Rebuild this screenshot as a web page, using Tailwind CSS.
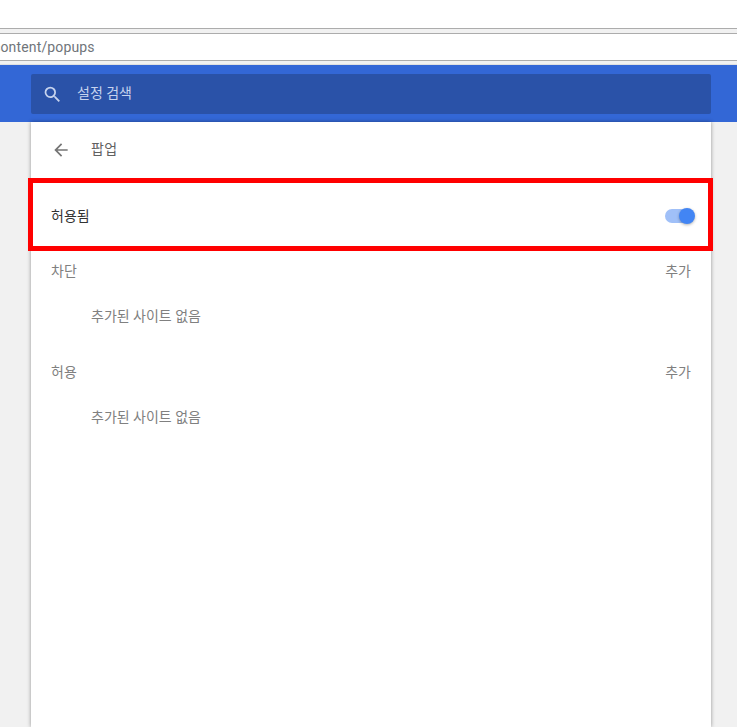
<!DOCTYPE html>
<html lang="ko">

<head>
  <meta charset="UTF-8" />
  <meta name="viewport" content="width=device-width, initial-scale=1.0" />
  <script src="https://cdn.jsdelivr.net/npm/@tailwindcss/browser@4"></script>
  <title>팝업</title>
</head>

<body class="bg-[#f1f1f1] h-[727px] w-[737px] overflow-hidden font-['Roboto','Noto_Sans_CJK_KR',sans-serif]">
  <!-- browser chrome -->
  <div class="h-[28px] bg-white"></div>
  <div class="h-[6px] bg-[#f1f1f1] border-y border-[#acacac]"></div>
  <div class="h-[27px] bg-white border-b border-[#acacac] flex items-center overflow-hidden">
    <span class="text-[14px] text-[#70757a] ml-[-7px] tracking-[0.15px] pt-[1px]">content/popups</span>
  </div>
  <div class="h-[4px] bg-[#f1f1f1] border-b border-[#e0e0e0]"></div>

  <!-- blue header -->
  <header class="h-[57px] bg-[#3367d6] pt-[9px] pl-[31px] pr-[26px]">
    <div class="h-[40px] bg-[#2a52a8] rounded-[2px] flex items-center pl-[11px]">
      <svg class="w-[21px] h-[21px]" viewBox="0 0 24 24" fill="#c6d3ee">
        <path d="M15.5 14h-.79l-.28-.27A6.47 6.47 0 0 0 16 9.5 6.5 6.5 0 1 0 9.5 16c1.61 0 3.09-.59 4.23-1.57l.27.28v.79l5 4.99L20.49 19l-4.99-5zm-6 0C7.01 14 5 11.99 5 9.5S7.01 5 9.5 5 14 7.01 14 9.5 11.99 14 9.5 14z" />
      </svg>
      <span class="ml-[14px] text-[14px] text-[#c6d3ee] mt-[-2px]">설정 검색</span>
    </div>
  </header>

  <!-- settings card -->
  <main class="relative ml-[31px] w-[680px] h-[605px] bg-white shadow-[0_0_4px_rgba(0,0,0,0.4)]">
    <div class="h-[56px] flex items-center pl-[20px]">
      <svg class="w-[20px] h-[20px]" viewBox="0 0 24 24" fill="#757575">
        <path d="M20 11H7.83l5.59-5.59L12 4l-8 8 8 8 1.41-1.41L7.83 13H20v-2z" />
      </svg>
      <h1 class="ml-[20px] text-[14px] text-[#616161] tracking-[0.3px] pb-[2px]">팝업</h1>
    </div>

    <div class="mt-[2px] h-[72px] flex items-center justify-between pl-[20px] pr-[16px]">
      <span class="text-[14px] text-[#333]">허용됨</span>
      <div class="relative w-[30px] h-[14px]">
        <div class="absolute left-0 top-0 w-[26px] h-[14px] rounded-full bg-[#a0c0f8]"></div>
        <div class="absolute right-0 top-[-1px] w-[16px] h-[16px] rounded-full bg-[#4285f4] shadow-[0_1px_3px_rgba(0,0,0,0.3)]"></div>
      </div>
    </div>

    <div class="h-[39px] flex items-center justify-between px-[20px] text-[14px] text-[#808080]">
      <span>차단</span>
      <span>추가</span>
    </div>
    <div class="h-[50px] flex items-center pl-[60px] text-[14px] text-[#808080]">추가된 사이트 없음</div>

    <div class="mt-[12px] h-[39px] flex items-center justify-between px-[20px] text-[14px] text-[#808080]">
      <span>허용</span>
      <span>추가</span>
    </div>
    <div class="h-[50px] flex items-center pl-[60px] text-[14px] text-[#808080]">추가된 사이트 없음</div>

    <!-- red highlight over the first row -->
    <div class="absolute left-[-3px] top-[56px] w-[685px] h-[73px] border-[5px] border-[#ff0000]"></div>
  </main>
</body>

</html>
